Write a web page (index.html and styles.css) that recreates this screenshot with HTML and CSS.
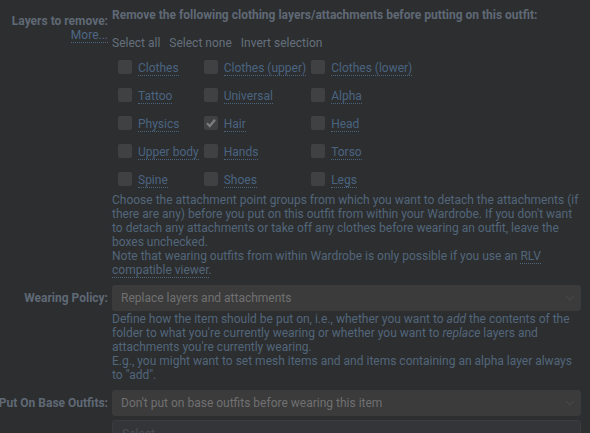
FILE: index.html
```html
<!DOCTYPE html>
<html>
<head>
<meta charset="utf-8">
<link rel="stylesheet" href="styles.css">
</head>
<body>
<div class="form">
  <div class="row">
    <div class="label label-top"><span>Layers to remove:</span><span class="more">More...</span></div>
    <div class="field">
      <div class="title">Remove the following clothing layers/attachments before putting on this outfit:</div>
      <div class="actions"><span>Select all</span><span>Select none</span><span>Invert selection</span></div>
      <div class="grid">
        <label class="cb"><span class="box"></span><span class="cbl">Clothes</span></label>
        <label class="cb"><span class="box"></span><span class="cbl">Clothes (upper)</span></label>
        <label class="cb"><span class="box"></span><span class="cbl">Clothes (lower)</span></label>
        <label class="cb"><span class="box"></span><span class="cbl">Tattoo</span></label>
        <label class="cb"><span class="box"></span><span class="cbl">Universal</span></label>
        <label class="cb"><span class="box"></span><span class="cbl">Alpha</span></label>
        <label class="cb"><span class="box"></span><span class="cbl">Physics</span></label>
        <label class="cb"><span class="box checked"><svg viewBox="0 0 14 14" width="14" height="14"><path d="M3 7.2 L5.8 10 L11 3.8" fill="none" stroke="#7e7e7e" stroke-width="2.2"/></svg></span><span class="cbl">Hair</span></label>
        <label class="cb"><span class="box"></span><span class="cbl">Head</span></label>
        <label class="cb"><span class="box"></span><span class="cbl">Upper body</span></label>
        <label class="cb"><span class="box"></span><span class="cbl">Hands</span></label>
        <label class="cb"><span class="box"></span><span class="cbl">Torso</span></label>
        <label class="cb"><span class="box"></span><span class="cbl">Spine</span></label>
        <label class="cb"><span class="box"></span><span class="cbl">Shoes</span></label>
        <label class="cb"><span class="box"></span><span class="cbl">Legs</span></label>
      </div>
      <div class="desc">Choose the attachment point groups from which you want to detach the attachments (if there are any) before you put on this outfit from within your Wardrobe. If you don't want to detach any attachments or take off any clothes before wearing an outfit, leave the boxes unchecked.<br>Note that wearing outfits from within Wardrobe is only possible if you use an <span class="dot">RLV compatible viewer</span>.</div>
    </div>
  </div>
  <div class="row">
    <div class="label label-sel"><span>Wearing Policy:</span></div>
    <div class="field">
      <div class="select"><span>Replace layers and attachments</span><svg class="chev" viewBox="0 0 10 6" width="10" height="6"><path d="M1 1 L5 5 L9 1" fill="none" stroke="#474747" stroke-width="1.2"/></svg></div>
      <div class="desc desc2">Define how the item should be put on, i.e., whether you want to <i>add</i> the contents of the folder to what you're currently wearing or whether you want to <i>replace</i> layers and attachments you're currently wearing.<br>E.g., you might want to set mesh items and and items containing an alpha layer always to "add".</div>
    </div>
  </div>
  <div class="row">
    <div class="label label-sel"><span>Put On Base Outfits:</span></div>
    <div class="field">
      <div class="select"><span>Don't put on base outfits before wearing this item</span><svg class="chev" viewBox="0 0 10 6" width="10" height="6"><path d="M1 1 L5 5 L9 1" fill="none" stroke="#474747" stroke-width="1.2"/></svg></div>
      <div class="select select2"><span>Select...</span></div>
    </div>
  </div>
</div>
</body>
</html>
```
FILE: styles.css
```css
html, body {
  margin: 0;
  padding: 0;
  background: #2d2e30;
  overflow: hidden;
}
body {
  font-family: Roboto, "Liberation Sans", sans-serif;
  font-size: 12px;
  color: #52667a;
}
.form {
  display: flex;
  flex-direction: column;
  padding-top: 8px;
}
.row {
  display: flex;
  gap: 4px;
}
.label {
  width: 108px;
  flex: none;
  display: flex;
  flex-direction: column;
  align-items: flex-end;
  font-weight: 700;
  color: #5f6975;
  white-space: nowrap;
}
.label-top {
  padding-top: 6px;
  line-height: 14px;
}
.label-sel {
  line-height: 26px;
  margin-top: 8px;
}
.more {
  font-weight: 400;
  color: #4e6883;
  border-bottom: 1px dotted #4e6883;
  line-height: 13px;
  margin-top: 1px;
}
.field {
  flex: 1;
  padding-right: 9px;
  min-width: 0;
}
.title {
  font-weight: 700;
  color: #5f6975;
  line-height: 14px;
}
.actions {
  display: flex;
  gap: 9px;
  margin-top: 14px;
  color: #65707c;
  line-height: 14px;
}
.grid {
  display: grid;
  grid-template-columns: auto auto 1fr;
  column-gap: 5px;
  padding-left: 6px;
  margin-top: 5px;
}
.cb {
  display: flex;
  align-items: center;
  gap: 6px;
  height: 28px;
}
.box {
  width: 14px;
  height: 14px;
  background: #404143;
  border-radius: 2px;
  flex: none;
  margin-top: -4px;
}
.box svg {
  display: block;
}
.cbl {
  color: #4a6480;
  border-bottom: 1px dotted #4a6480;
  line-height: 13px;
}
.desc {
  line-height: 14px;
  margin-top: -2px;
}
.dot {
  border-bottom: 1px dotted #52667a;
}
.select {
  height: 26px;
  background: #3b3b3c;
  border-radius: 3px;
  display: flex;
  align-items: center;
  justify-content: space-between;
  padding: 0 6px 0 9px;
  color: #707070;
  margin-top: 8px;
}
.desc2 {
  margin-top: 1px;
}
.select2 {
  margin-top: 4px;
  background: #333538;
  border: 1px solid #393b3e;
  color: #4a4e52;
}
```
